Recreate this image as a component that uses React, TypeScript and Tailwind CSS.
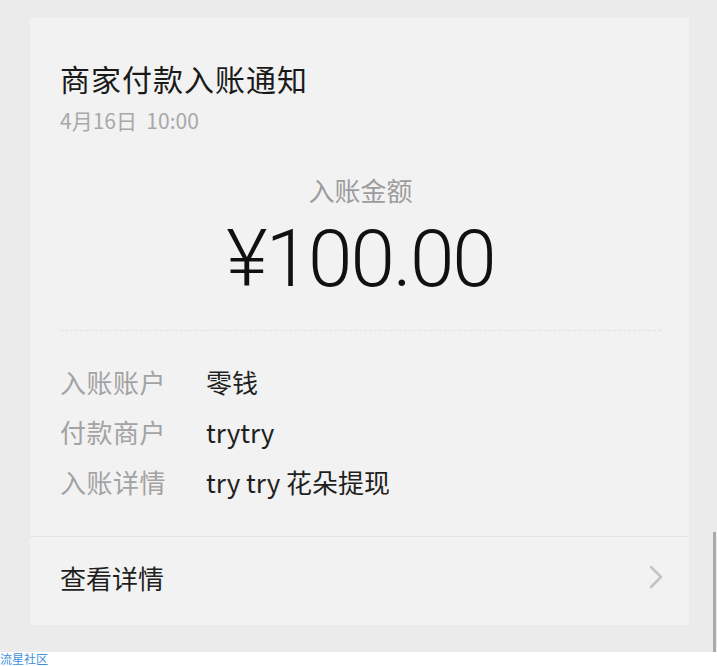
import React from 'react';

const rows = [
  { label: '入账账户', value: '零钱' },
  { label: '付款商户', value: 'trytry' },
  { label: '入账详情', value: 'try try 花朵提现' },
];

const cjk = { fontFamily: '"Noto Sans CJK SC", "Noto Sans", sans-serif' };

export default function App() {
  return (
    <div className="relative w-[717px] h-[666px] bg-[#ebebeb] overflow-hidden" style={cjk}>
      <div className="h-[652px] pt-[18px] pl-[30px]">
        <div className="w-[659px] h-[607px] bg-[#f2f2f2] flex flex-col">
          <div className="pl-[30px] pr-[28px] pt-[41px]">
            <h1 className="text-[30px] leading-[39px] text-[#1a1a1a] tracking-[1px]">商家付款入账通知</h1>
            <p className="mt-[8px] text-[21px] leading-[28px] text-[#a8a8a8]">4月16日&nbsp;&nbsp;10:00</p>

            <div className="mt-[39px] flex flex-col items-center">
              <p className="text-[26px] leading-[34px] text-[#9c9c9c]">入账金额</p>
              <p
                className="mt-[12px] text-[80px] leading-[80px] font-light text-[#111] tracking-[-2px]"
                style={{ fontFamily: 'Roboto, "Liberation Sans", sans-serif' }}
              >
                ¥100.00
              </p>
            </div>

            <div className="mt-[31px] border-t border-dashed border-[#e2e2e2]" />

            <div className="mt-[25px]">
              {rows.map(r => (
                <div key={r.label} className="flex h-[50px] items-center text-[26px]">
                  <span className="w-[146px] text-[#a3a3a3] tracking-[0.5px]">{r.label}</span>
                  <span className="text-[#1f1f1f]">{r.value}</span>
                </div>
              ))}
            </div>
          </div>

          <div className="mt-[30px] border-t border-[#e4e4e4]" />
          <div className="flex flex-1 items-center justify-between pl-[30px] pr-[26px] pb-[8px]">
            <span className="text-[26px] text-[#1f1f1f]">查看详情</span>
            <svg width="14" height="24" viewBox="0 0 14 24" fill="none">
              <path d="M2 2 L12 12 L2 22" stroke="#c4c4c4" strokeWidth="2.5" strokeLinecap="round" strokeLinejoin="round" />
            </svg>
          </div>
        </div>
      </div>

      <div className="absolute right-[1px] top-[532px] w-[3px] h-[120px] bg-[#a9a9a9]" />

      <div className="h-[14px] bg-white">
        <span className="block text-[12px] leading-[14px] text-[#3d8fe0]">流星社区</span>
      </div>
    </div>
  );
}
